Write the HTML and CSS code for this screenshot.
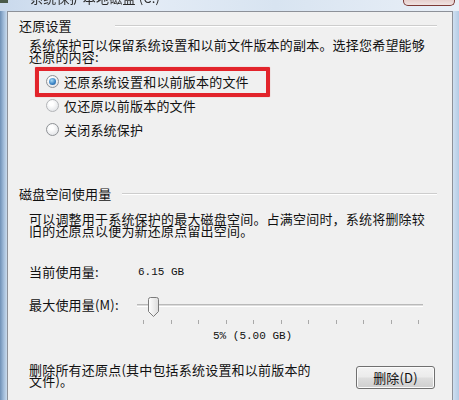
FILE: index.html
```html
<!DOCTYPE html>
<html lang="zh-CN">
<head>
<meta charset="utf-8">
<title>系统保护</title>
<link rel="stylesheet" href="styles.css">
</head>
<body>
<div class="window">
  <div class="titlebar">
    <span class="tb-icon"></span>
    <span class="tb-title">系统保护本地磁盘 (C:)</span>
    <span class="tb-close"></span>
  </div>
  <div class="frame">
    <div class="edge-left"></div>
    <div class="panel">
      <section class="group">
        <div class="group-head">
          <span class="group-title">还原设置</span>
          <span class="rule rule-first"></span>
        </div>
        <p class="desc">系统保护可以保留系统设置和以前文件版本的副本。选择您希望能够还原的内容:</p>
        <div class="radios">
          <div class="radio-row"><span class="radio checked"></span><span>还原系统设置和以前版本的文件</span></div>
          <div class="radio-row faded"><span class="radio"></span><span>仅还原以前版本的文件</span></div>
          <div class="radio-row"><span class="radio"></span><span>关闭系统保护</span></div>
          <div class="highlight"></div>
        </div>
      </section>
      <section class="group group-disk">
        <div class="group-head">
          <span class="group-title">磁盘空间使用量</span>
          <span class="rule rule-second"></span>
        </div>
        <p class="desc desc-disk">可以调整用于系统保护的最大磁盘空间。占满空间时，系统将删除较旧的还原点以便为新还原点留出空间。</p>
        <div class="field field-current">
          <span class="field-label">当前使用量:</span>
          <span class="mono">6.15 GB</span>
        </div>
        <div class="field field-max">
          <span class="field-label">最大使用量(M):</span>
          <div class="slider">
            <div class="track-area">
              <div class="track"></div>
              <svg class="thumb" width="13" height="21" viewBox="0 0 13 21">
                <defs>
                  <linearGradient id="tg" x1="0" y1="0" x2="1" y2="0">
                    <stop offset="0" stop-color="#ffffff"/>
                    <stop offset="1" stop-color="#dcdcdc"/>
                  </linearGradient>
                </defs>
                <path d="M1.5 2.5 Q1.5 0.5 3.5 0.5 H9.5 Q11.5 0.5 11.5 2.5 V14.5 L6.5 19.5 L1.5 14.5 Z" fill="url(#tg)" stroke="#7b7b7b" stroke-width="1"/>
              </svg>
            </div>
            <div class="ticks">
              <i></i><i></i><i></i><i></i><i></i><i></i><i></i><i></i><i></i><i></i><i></i>
            </div>
          </div>
        </div>
        <div class="percent mono">5% (5.00 GB)</div>
        <div class="delete-row">
          <p class="delete-text">删除所有还原点(其中包括系统设置和以前版本的文件)。</p>
          <button class="btn" type="button">删除(D)</button>
        </div>
      </section>
    </div>
    <div class="edge-right"></div>
  </div>
</div>
</body>
</html>
```

FILE: styles.css
```css
* { box-sizing: border-box; }
html, body {
  margin: 0;
  padding: 0;
}
body {
  width: 459px;
  height: 400px;
  overflow: hidden;
  background: #dfe8f3;
  font-family: "Noto Sans CJK SC", "Noto Sans", sans-serif;
  font-size: 13px;
  letter-spacing: 0.2px;
  color: #111;
}
.window {
  display: flex;
  flex-direction: column;
  height: 400px;
}
.titlebar {
  height: 11px;
  display: flex;
  align-items: flex-start;
  overflow: hidden;
  background: linear-gradient(to right, #c9d9ec, #e4ecf6 30%, #d8e4f1 60%, #e9eff7);
}
.tb-icon {
  width: 8px;
  height: 3px;
  background: #4a5a4a;
  flex: none;
}
.tb-title {
  margin-left: 22px;
  margin-top: -9px;
  line-height: 13px;
  color: #2a2a2a;
  filter: blur(0.5px);
  white-space: nowrap;
}
.tb-close {
  margin-left: auto;
  margin-right: 4px;
  width: 52px;
  height: 6px;
  border: 1px solid #7d3a36;
  border-top: none;
  border-radius: 0 0 5px 5px;
  background: linear-gradient(#e7cfcd, #efe3e2);
  flex: none;
}
.frame {
  flex: 1;
  display: flex;
  min-height: 0;
}
.edge-left {
  width: 7px;
  flex: none;
  background: linear-gradient(to right, #6f90b6, #9fbad8 50%, #c9daec);
}
.edge-right {
  width: 6px;
  flex: none;
  background: linear-gradient(to right, #cfe0f1, #b4cbe5);
}
.panel {
  flex: 1;
  background: #f0f0f0;
  border: 1px solid #8d9199;
  border-bottom: none;
  padding: 7px 15px 0 11px;
  overflow: hidden;
}
.group-head {
  display: flex;
  align-items: center;
  height: 13px;
  line-height: 13px;
}
.group-title { white-space: nowrap; }
.rule {
  flex: 1;
  height: 2px;
  border-top: 1px solid #cdcdcd;
  border-bottom: 1px solid #ffffff;
  margin-top: 1px;
}
.rule-first { margin-left: 43px; }
.rule-second { margin-left: 11px; }
.desc {
  margin: 7px 0 0 10px;
  width: 405px;
  line-height: 12px;
}
.radios {
  position: relative;
  margin-top: 6px;
  padding-left: 27px;
}
.radio-row {
  height: 24px;
  display: flex;
  align-items: center;
  white-space: nowrap;
}
.radio {
  width: 13px;
  height: 13px;
  border-radius: 50%;
  border: 1px solid #8f9296;
  background: radial-gradient(circle at 40% 35%, #ffffff 20%, #e2e4e7 80%);
  margin-right: 5px;
  flex: none;
  display: flex;
  align-items: center;
  justify-content: center;
}
.radio.checked::after {
  content: "";
  width: 7px;
  height: 7px;
  border-radius: 50%;
  background: radial-gradient(circle at 40% 35%, #a9dbf7 0%, #3d86c6 55%, #1b4f8c 100%);
}
.faded .radio { border-color: #b3b5b8; }
.highlight {
  position: absolute;
  left: 16px;
  top: -2px;
  width: 235px;
  height: 30px;
  border: 4px solid #e2242b;
  border-radius: 1px;
  box-shadow: 0 0 1px rgba(226, 36, 43, 0.6);
  pointer-events: none;
}
.group-disk { margin-top: 46px; }
.desc-disk { margin-top: 13px; }
.field {
  display: flex;
  align-items: flex-start;
  padding-left: 10px;
}
.field-label {
  width: 109px;
  flex: none;
  line-height: 20px;
  white-space: nowrap;
}
.field-current { margin-top: 25px; height: 20px; }
.field-current .mono { line-height: 20px; }
.field-max { margin-top: 13px; }
.mono {
  font-family: "Liberation Mono", monospace;
  font-size: 11px;
  letter-spacing: 0;
  color: #111;
}
.slider {
  width: 286px;
  margin-left: -1px;
}
.track-area {
  position: relative;
  height: 20px;
  display: flex;
  align-items: center;
}
.track {
  width: 100%;
  height: 3px;
  border-top: 1px solid #b9b9b9;
  border-bottom: 1px solid #ffffff;
  background: #dcdcdc;
}
.thumb {
  position: absolute;
  left: 10px;
  top: 2px;
}
.ticks {
  display: flex;
  justify-content: space-between;
  margin: 5px 4px 0 6px;
  height: 4px;
}
.ticks i {
  width: 1px;
  height: 4px;
  background: #a9a9a9;
}
.percent {
  margin-top: 5px;
  padding-left: 194px;
  line-height: 14px;
}
.delete-row {
  display: flex;
  align-items: flex-start;
  margin-top: 21px;
  padding-left: 10px;
}
.delete-text {
  margin: 0;
  width: 288px;
  line-height: 11px;
}
.btn {
  margin: 2px 2px 0 auto;
  width: 79px;
  height: 23px;
  border: 1px solid #707070;
  border-radius: 3px;
  background: linear-gradient(#f3f3f3 0%, #ebebeb 48%, #dddddd 52%, #cfcfcf 100%);
  box-shadow: inset 0 0 0 1px #fbfbfb;
  font-family: "Noto Sans CJK SC", "Noto Sans", sans-serif;
  font-size: 13px;
  letter-spacing: 0.2px;
  color: #111;
  padding: 0;
  line-height: 20px;
}
```
